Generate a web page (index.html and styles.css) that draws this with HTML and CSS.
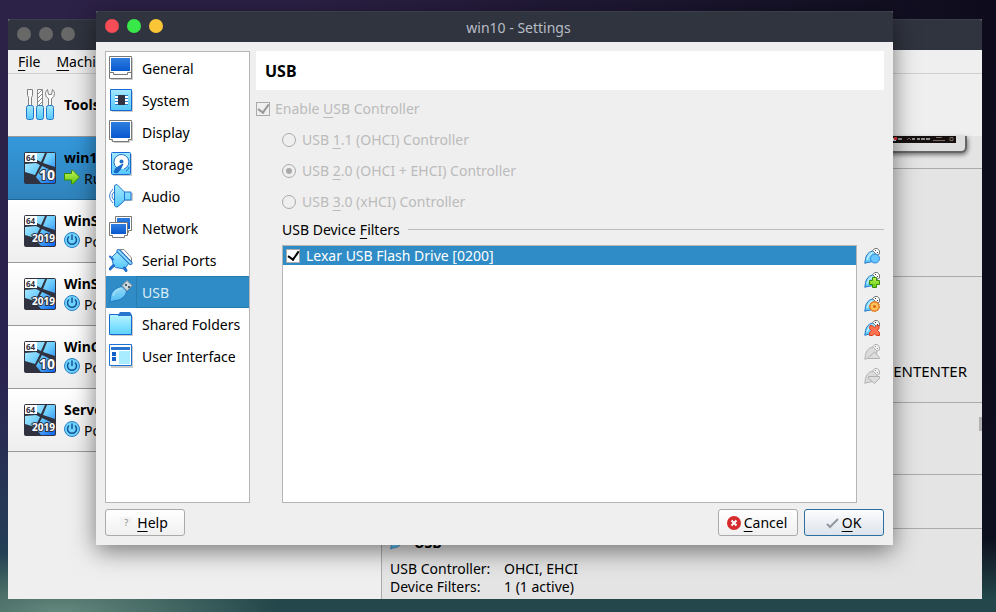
FILE: index.html
```html
<!DOCTYPE html>
<html lang="en">
<head>
<meta charset="utf-8">
<title>win10 - Settings</title>
<link rel="stylesheet" href="styles.css">
</head>
<body>
<svg class="defs" aria-hidden="true">
  <defs>
    <linearGradient id="sky" x1="0" y1="0" x2="0" y2="1"><stop offset="0" stop-color="#a4e8ff"/><stop offset="1" stop-color="#55c8fb"/></linearGradient>
    <linearGradient id="folder" x1="0" y1="0" x2="0" y2="1"><stop offset="0" stop-color="#b8f4ff"/><stop offset="1" stop-color="#5cd2ff"/></linearGradient>
    <linearGradient id="screen" x1="0" y1="0" x2="0" y2="1"><stop offset="0" stop-color="#2f7de0"/><stop offset="1" stop-color="#0759ce"/></linearGradient>
    <linearGradient id="pane" x1="0" y1="0" x2="1" y2="1"><stop offset="0" stop-color="#c4f4ff"/><stop offset=".5" stop-color="#6accff"/><stop offset="1" stop-color="#0b62f0"/></linearGradient>
    <linearGradient id="green" x1="0" y1="0" x2="0" y2="1"><stop offset="0" stop-color="#c9f55a"/><stop offset="1" stop-color="#5bc90c"/></linearGradient>
  </defs>
  <symbol id="i-general" viewBox="0 0 24 24">
    <path d="M2 2h22v22H2z" fill="#ccc"/>
    <path d="M.5.5h22v22H.5z" fill="#fff" stroke="#777"/>
    <path d="M2 2h19v13H2z" fill="url(#screen)"/>
    <path d="M1 16.500h3.500v2h14v-2H22" fill="none" stroke="#777"/>
  </symbol>
  <symbol id="i-display" viewBox="0 0 24 24">
    <path d="M2 2h22v19h-3v2H5v-2H2z" fill="#ccc"/>
    <path d="M.5.5h22v19h-3v2h-16v-2h-3z" fill="#fff" stroke="#777"/>
    <path d="M2 2h19v16H2z" fill="url(#screen)"/>
  </symbol>
  <symbol id="i-system" viewBox="0 0 24 24">
    <path d="M3 3h21v21H3z" fill="#ccc"/>
    <path d="M1.500 1.500h21v21h-21z" fill="url(#sky)" stroke="#1769d6"/>
    <path d="M6 7h13v10H6z" fill="#2480d2"/>
    <path d="M6 8h3v2H6zM6 11h3v2H6zM6 14h3v2H6zM16 8h3v2h-3zM16 11h3v2h-3zM16 14h3v2h-3z" fill="#fff"/>
    <path d="M9 7h7v10H9z" fill="#30323f"/>
  </symbol>
  <symbol id="i-storage" viewBox="0 0 24 24">
    <path d="M4 2h19v22H4z" fill="#ccc"/>
    <rect x="2.500" y=".5" width="19" height="22" rx="1" fill="url(#sky)" stroke="#1769d6"/>
    <path d="M8 16A7.500 7.500 0 1 1 15 17" fill="#fff" stroke="#1f6fc7"/>
    <circle cx="12.500" cy="9.500" r="2" fill="#1f6fc7"/>
    <path d="M14 12L7 16l-2 4 3 1 3-3z" fill="#1a67c6" stroke="#1a67c6"/>
    <path d="M17 19a5 5 0 0 0 3-4" fill="none" stroke="#1f6fc7"/>
  </symbol>
  <symbol id="i-audio" viewBox="0 0 24 24">
    <path d="M8 3l8 6h8v8h-8l-8 7z" fill="#ccc"/>
    <path d="M4 5Q-3 12 4 19M5 8Q1 12 5 16" fill="none" stroke="#3f83cf"/>
    <path d="M5.500 2Q6 .5 8 .5L13 5.500 15.500 8h6.500v8h-6.500L13 19 8 23q-2 0-2.500-1.500z" fill="url(#sky)" stroke="#1f74cd"/>
    <path d="M15.500 8v8" stroke="#1f74cd"/>
  </symbol>
  <symbol id="i-network" viewBox="0 0 24 24">
    <path d="M6.500.5h16v14h-3v2h-10v-2h-3z" fill="#fff" stroke="#777"/><path d="M8 2h13v11H8z" fill="url(#screen)"/>
    <path d="M.5 6.500h18v13h-3v2h-12v-2h-3z" fill="#fff" stroke="#777"/><path d="M2 8h15v10H2z" fill="url(#screen)"/>
  </symbol>
  <symbol id="i-serial" viewBox="0 0 24 24">
    <path d="M11 1.500h4l7.500 8.500v4z" fill="#fff" stroke="#888"/>
    <path d="M8.500 3.500L2.500 9.500l2 8 2 2 9 1.500 4.500-6z" fill="url(#sky)" stroke="#2a78cf"/>
    <path d="M9.500 3l12 12" stroke="#1f6fcc" stroke-width="4" stroke-linecap="round"/>
    <path d="M9.500 3l12 12" stroke="#8edcff" stroke-width="2" stroke-linecap="round"/>
    <path d="M4.500 17.500L1 21M15.500 20l1.500 2.500" stroke="#1f6fcc" stroke-width="3" stroke-linecap="round"/>
    <path d="M1 8.500l3 3" stroke="#1f6fcc" stroke-width="2" stroke-linecap="round"/>
  </symbol>
  <symbol id="i-usb" viewBox="0 0 24 24">
    <path d="M1 22.500C2 18 1 15 4 11 7 8 10 7 13 6.500L17.500 11C17 15 15 17 12 19 9 21 5 20 1 22.500z" fill="url(#sky)" stroke="#1e73c4"/>
    <path d="M4 16Q6 10 12 8.500" fill="none" stroke="#d2f5ff"/>
    <path d="M13 5.500L18 .5l5 5-5 5.500z" fill="#e8e8e8" stroke="#8b8b8b"/>
    <path d="M16 4h2v2h-2zM19 6h2v2h-2z" fill="#555"/>
  </symbol>
  <symbol id="i-folder" viewBox="0 0 24 24">
    <path d="M2 4h22v20H2z" fill="#ccc"/>
    <path d="M.5 2.500h9l1 1h12v19H.5z" fill="url(#folder)" stroke="#1769d6"/>
    <path d="M9 3l2-3h10l2 3v1H9z" fill="#2775cf"/>
  </symbol>
  <symbol id="i-ui" viewBox="0 0 24 24">
    <path d="M2 2h22v22H2z" fill="#ccc"/><path d="M.5.5h22v21H.5z" fill="#fff" stroke="#1d73d4"/>
    <path d="M2 3h19v3H2z" fill="#2775cf"/><path d="M3 8h4v4H3zM3 13h4v4H3z" fill="#155fc8"/>
    <path d="M10 7h11v13H10z" fill="#a8ecff"/>
  </symbol>
  <symbol id="i-tools" viewBox="0 0 32 36">
    <path d="M3.500 2.500h5v6l-1 2v8h-3v-8l-1-2z" fill="#f8f8f8" stroke="#808080"/>
    <path d="M13.500 2.500h5v16h-5z" fill="#fff" stroke="#888"/>
    <path d="M14 7l4-4M14 11l4-4M14 15l4-4M14 19l4-4" stroke="#888"/>
    <path d="M24.500 18.500v-7q-3-1-3-5 0-2 2-4l1 5h3l1-5q2 2 2 4 0 4-3 5v7z" fill="#fff" stroke="#808080"/>
    <path d="M2.500 20.500q0-2 2-2h3q2 0 2 2v10q0 2-2 2h-3q-2 0-2-2zM12.500 20.500q0-2 2-2h3q2 0 2 2v10q0 2-2 2h-3q-2 0-2-2zM22.500 20.500q0-2 2-2h3q2 0 2 2v10q0 2-2 2h-3q-2 0-2-2z" fill="url(#sky)" stroke="#2077c8"/>
  </symbol>
  <symbol id="i-win" viewBox="0 0 32 32">
    <rect width="32" height="32" rx="2" fill="#30323f"/>
    <path d="M13 1h8l-4 9-4-2zM23 1h8v14l-12-4zM1 12l11-1 4 2-5 10-10-3zM18 14l13 6v10l-1 1H17l-5-6z" fill="url(#pane)"/>
    <path d="M1 1h12v9H1z" fill="#fff"/>
  </symbol>
  <symbol id="i-power" viewBox="0 0 16 16">
    <circle cx="8" cy="8" r="7.500" fill="#70d5ff" stroke="#2b7fc6"/>
    <path d="M5 4.500a4.500 4.500 0 1 0 6 0M8 2.500v5.500" fill="none" stroke="#12569b" stroke-width="1.500"/>
  </symbol>
  <symbol id="i-run" viewBox="0 0 16 16">
    <path d="M.5 4.500h7v-3h1.500l6.500 6.500L9 15H7.500v-4h-7z" fill="url(#green)" stroke="#3b8c08"/>
  </symbol>
  <symbol id="i-plug" viewBox="0 0 16 16">
    <path d="M.8 15.300C1.500 12 1 9 4 5.500 6 3.500 8 3 9.500 3L13 7C13 11 11 13 8.500 13.500 6 14.500 4 14 .8 15.300z" fill="url(#sky)" stroke="#2277c8"/>
    <path d="M3 12Q4 7 8 5" fill="none" stroke="#d4f6ff"/>
    <path d="M8.500 2.500L11 .5h2.500L15.500 3v3L13 7z" fill="#fff" stroke="#777"/>
    <path d="M11 2h1v1h-1zM13 4h1v1h-1z" fill="#444"/>
  </symbol>
  <symbol id="i-plug-off" viewBox="0 0 16 16">
    <path d="M.8 15.300C1.500 12 1 9 4 5.500 6 3.500 8 3 9.500 3L13 7C13 11 11 13 8.500 13.500 6 14.500 4 14 .8 15.300z" fill="#dadada" stroke="#b4b4b4"/>
    <path d="M8.500 2.500L11 .5h2.500L15.500 3v3L13 7z" fill="#eee" stroke="#b4b4b4"/>
    <path d="M11 2h1v1h-1zM13 4h1v1h-1z" fill="#999"/>
  </symbol>
</svg>

<section class="window manager">
  <header class="titlebar"><i class="dot"></i><i class="dot"></i><i class="dot"></i></header>
  <nav class="menubar"><a href="#file"><u>F</u>ile</a><a href="#machine"><u>M</u>achine</a></nav>
  <div class="workspace">
    <div class="machines">
      <div class="tools"><svg class="tools-icon"><use href="#i-tools"/></svg><b>Tools</b></div>
      <div class="machine current">
        <svg class="os" viewBox="0 0 32 32"><use href="#i-win"/><text x="2" y="9" class="os-bits">64</text><text x="31" y="28" class="os-name">10</text></svg>
        <div class="info"><b>win10</b><span><svg><use href="#i-run"/></svg>Running</span></div>
      </div>
      <div class="machine">
        <svg class="os" viewBox="0 0 32 32"><use href="#i-win"/><text x="2" y="9" class="os-bits">64</text><text x="31" y="27" class="os-name year">2019</text></svg>
        <div class="info"><b>WinS</b><span><svg><use href="#i-power"/></svg>Powered</span></div>
      </div>
      <div class="machine">
        <svg class="os" viewBox="0 0 32 32"><use href="#i-win"/><text x="2" y="9" class="os-bits">64</text><text x="31" y="27" class="os-name year">2019</text></svg>
        <div class="info"><b>WinS</b><span><svg><use href="#i-power"/></svg>Powered</span></div>
      </div>
      <div class="machine">
        <svg class="os" viewBox="0 0 32 32"><use href="#i-win"/><text x="2" y="9" class="os-bits">64</text><text x="31" y="28" class="os-name">10</text></svg>
        <div class="info"><b>WinC</b><span><svg><use href="#i-power"/></svg>Powered</span></div>
      </div>
      <div class="machine">
        <svg class="os" viewBox="0 0 32 32"><use href="#i-win"/><text x="2" y="9" class="os-bits">64</text><text x="31" y="27" class="os-name year">2019</text></svg>
        <div class="info"><b>Server</b><span><svg><use href="#i-power"/></svg>Powered</span></div>
      </div>
    </div>
    <div class="details">
      <div class="block preview">
        <div class="monitor"><svg class="tray" viewBox="0 0 66 7">
          <path d="M2 2h4v3H2z" fill="#dfe8fa"/><path d="M4 1h3v3H4z" fill="#d33"/>
          <path d="M8 3h4M22 3h3M27 3h3M31 3h4M36 3h4" stroke="#8d8d8d" stroke-width="2"/>
          <path d="M17 4l2-2 2 2M46 1.500h6M43 4.500h12M60 1.500h3v3h-3z" fill="none" stroke="#77695e"/>
        </svg></div>
      </div>
      <div class="block system"></div>
      <div class="block adapter"><span>ENTENTER</span></div>
      <div class="block audio"><i class="scroll"></i></div>
      <div class="block network"></div>
      <div class="block usb">
        <h3><svg><use href="#i-usb"/></svg>USB</h3>
        <dl><dt>USB Controller:</dt><dd>OHCI, EHCI</dd><dt>Device Filters:</dt><dd>1 (1 active)</dd></dl>
      </div>
    </div>
  </div>
</section>

<section class="window dialog" role="dialog" aria-labelledby="dialog-title">
  <header class="titlebar">
    <i class="dot red"></i><i class="dot green"></i><i class="dot yellow"></i>
    <h1 id="dialog-title">win10 - Settings</h1>
  </header>
  <div class="body">
    <nav class="categories">
      <a href="#general"><svg><use href="#i-general"/></svg><span>General</span></a>
      <a href="#system"><svg><use href="#i-system"/></svg><span>System</span></a>
      <a href="#display"><svg><use href="#i-display"/></svg><span>Display</span></a>
      <a href="#storage"><svg><use href="#i-storage"/></svg><span>Storage</span></a>
      <a href="#audio"><svg><use href="#i-audio"/></svg><span>Audio</span></a>
      <a href="#network"><svg><use href="#i-network"/></svg><span>Network</span></a>
      <a href="#serial"><svg><use href="#i-serial"/></svg><span>Serial Ports</span></a>
      <a href="#usb" class="active" aria-current="page"><svg><use href="#i-usb"/></svg><span>USB</span></a>
      <a href="#folders"><svg><use href="#i-folder"/></svg><span>Shared Folders</span></a>
      <a href="#ui"><svg><use href="#i-ui"/></svg><span>User Interface</span></a>
    </nav>
    <main class="page">
      <h2>USB</h2>
      <div class="option"><input type="checkbox" id="enable" checked disabled><label for="enable">Enable <u>U</u>SB Controller</label></div>
      <div class="option sub"><input type="radio" name="ctl" id="usb1" disabled><label for="usb1">USB <u>1</u>.1 (OHCI) Controller</label></div>
      <div class="option sub"><input type="radio" name="ctl" id="usb2" checked disabled><label for="usb2">USB <u>2</u>.0 (OHCI + EHCI) Controller</label></div>
      <div class="option sub"><input type="radio" name="ctl" id="usb3" disabled><label for="usb3">USB <u>3</u>.0 (xHCI) Controller</label></div>
      <h3 class="group">USB Device <span><u>F</u>ilters</span></h3>
      <div class="filters">
        <div class="filter-list">
          <div class="filter"><input type="checkbox" id="lexar" checked><label for="lexar">Lexar USB Flash Drive [0200]</label></div>
        </div>
        <div class="actions">
          <button aria-label="Add empty filter"><svg viewBox="0 0 16 16"><use href="#i-plug"/><circle cx="11" cy="10.500" r="4.500" fill="#67c6ff" stroke="#2b86db"/></svg></button>
          <button aria-label="Add filter from device"><svg viewBox="0 0 16 16"><use href="#i-plug"/><path d="M8.500 5.500h4v3h3v4h-3v3h-4v-3h-3v-4h3z" fill="url(#green)" stroke="#3b8c08"/></svg></button>
          <button aria-label="Edit filter"><svg viewBox="0 0 16 16"><use href="#i-plug"/><circle cx="10.500" cy="10.500" r="5" fill="#ffb84a" stroke="#dd6a13" stroke-dasharray="2 1"/><circle cx="10.500" cy="10.500" r="4.500" fill="#ffc05a" stroke="#e3771b"/><circle cx="10.500" cy="10.500" r="1.300" fill="#c94f00"/></svg></button>
          <button aria-label="Remove filter"><svg viewBox="0 0 16 16"><use href="#i-plug"/><path d="M6 5.500h2l2.500 2 2.500-2h2v3l-1.500 2 2 2v3h-3l-2-1.500-2 1.500h-3v-3l2-2-2-2z" fill="#ff7250" stroke="#da3c20"/></svg></button>
          <button aria-label="Move filter up" disabled><svg viewBox="0 0 16 16"><use href="#i-plug-off"/><path d="M4.500 14.500v-1l6-5.500 5 5.500v1z" fill="#ddd" stroke="#b0b0b0"/></svg></button>
          <button aria-label="Move filter down" disabled><svg viewBox="0 0 16 16"><use href="#i-plug-off"/><path d="M4.500 8.500h11v2l-5 5-6-5z" fill="#ddd" stroke="#b0b0b0"/></svg></button>
        </div>
      </div>
    </main>
  </div>
  <footer class="buttons">
    <button class="push help"><i>?</i><span><u>H</u>elp</span></button>
    <button class="push"><svg viewBox="0 0 14 14"><circle cx="7" cy="7" r="7" fill="#d62b2f"/><path d="M4.500 4.500l5 5M9.500 4.500l-5 5" stroke="#fff" stroke-width="2"/></svg><span><u>C</u>ancel</span></button>
    <button class="push default"><svg viewBox="0 0 14 14"><path d="M2 8l3 3 8-8" fill="none" stroke="#94989f" stroke-width="2"/></svg><span><u>O</u>K</span></button>
  </footer>
</section>
</body>
</html>
```
FILE: styles.css
```css
* { box-sizing: border-box; }
html, body { height: 100%; }
body {
  margin: 0;
  position: relative;
  overflow: hidden;
  font: 14px/18px "Noto Sans", sans-serif;
  color: #000;
  background:
    radial-gradient(ellipse 220px 60px at 60px 100%, #64887c, transparent),
    linear-gradient(transparent 88%, #23474a 98%),
    linear-gradient(90deg, transparent 30%, rgba(8, 8, 20, .85)),
    linear-gradient(#2c2146, #2a2350 60%, #253e57 90%);
}
h1, h2, h3, dl, dd { margin: 0; font: inherit; }
a { color: inherit; text-decoration: none; }
u { text-decoration: underline 1px; text-underline-offset: 3px; }
svg { display: block; flex: none; width: 16px; height: 16px; }
.defs { position: absolute; width: 0; height: 0; }

.window { position: absolute; display: flex; flex-direction: column; background: #efefef; border-radius: 2px 2px 0 0; }
.manager { inset: 19px 14px 13px 8px; overflow: hidden; }
.dialog { inset: 11px 103px 67px 96px; box-shadow: 0 6px 24px rgba(0, 0, 0, .5); }
.titlebar { position: relative; flex: none; display: flex; align-items: center; gap: 8px; height: 31px; padding: 0 9px; background: #30343f; border-top: 1px solid #3a3e49; border-radius: 2px 2px 0 0; }
.manager .titlebar, .dialog .titlebar { padding-bottom: 2px; }
.titlebar h1 { flex: 1; padding: 4px 18px 0 0; text-align: center; color: #b8bcc5; }
.dot { flex: none; width: 14px; height: 14px; border-radius: 50%; background: #686868; }
.red { background: #f64c55; }
.green { background: #38e849; }
.yellow { background: #fac536; }

.menubar { flex: none; display: flex; gap: 16px; height: 24px; padding: 3px 10px; border-bottom: 1px solid #d0d0d0; }
.workspace { flex: 1; display: grid; grid-template-columns: 374px 1fr; min-height: 0; }
.machines { border-right: 1px solid #aaa; }
.tools { display: flex; align-items: center; gap: 8px; height: 63px; padding: 0 16px; border-bottom: 1px solid #999; }
.tools-icon { width: 32px; height: 36px; }
.machine { display: flex; gap: 8px; height: 63px; padding: 12px 16px; border-bottom: 1px solid #999; background: linear-gradient(#fff, #eee); }
.machine .os { width: 32px; height: 32px; margin-top: 3px; }
.current { background: linear-gradient(#3498dc, #2f83bb); border-color: #1d6695; }
.info b { display: block; }
.info span { display: flex; align-items: center; gap: 4px; padding-top: 3px; }
.info svg { margin-top: -5px; }
.os-bits { font: bold 8px "Noto Sans", sans-serif; fill: #30323f; }
.os-name { font: bold 14px "Noto Sans", sans-serif; fill: #fff; stroke: #30323f; stroke-width: 2px; paint-order: stroke; text-anchor: end; }
.year { font-size: 10px; }

.details { display: flex; flex-direction: column; min-width: 0; background: #e4e4e4; margin-top: 62px; }
.block { flex: none; border-bottom: 1px solid #aaa; }
.preview { height: 33px; padding-right: 15px; }
.monitor { height: 17px; padding-right: 9px; border: solid #666; border-width: 0 2px 2px 0; border-radius: 0 0 6px; background: #dedede; box-shadow: 1px 2px 4px #777; }
.tray { width: 66px; height: 7px; margin-left: auto; background: #15100f; }
.system { height: 108px; }
.adapter { height: 126px; padding: 85px 15px 0; text-align: right; font-size: 15px; }
.audio { height: 72px; padding-top: 14px; }
.scroll { display: block; width: 3px; height: 14px; margin-left: auto; background: #b3b3b3; }
.network { height: 54px; }
.usb { flex: 1; padding: 5px 8px; border: 0; }
.usb h3 { display: flex; gap: 8px; font-weight: bold; margin-bottom: 8px; }
.usb dl { display: grid; grid-template-columns: 104px 1fr; column-gap: 10px; }

.body { flex: 1; display: grid; grid-template-columns: 145px 1fr; gap: 6px; min-height: 0; padding: 9px 9px 6px; }
.categories { background: #fff; border: 1px solid #b5b5b5; }
.categories a { display: flex; align-items: center; height: 32px; padding-left: 3px; }
.categories svg { width: 24px; height: 24px; }
.categories span { flex: 1; height: 32px; margin-left: 3px; padding-left: 6px; line-height: 34px; white-space: nowrap; }
.categories .active { background: #308cc6; color: #dcecf7; }
.active svg { opacity: .85; }
.active span { border: 1px solid #287caf; border-right: 0; padding-left: 5px; line-height: 32px; }
.page { display: flex; flex-direction: column; min-width: 0; }
.page h2 { height: 39px; margin-bottom: 9px; padding: 0 9px; background: #fff; font-size: 16px; line-height: 40px; font-weight: bold; }
.option { display: flex; align-items: center; gap: 5px; height: 19px; margin-bottom: 12px; color: #bbb; }
.sub { margin-left: 26px; gap: 6px; }
input { appearance: none; flex: none; display: grid; place-items: center; width: 14px; height: 14px; margin: 0; background: #fff; border: 1px solid #aaa; }
input:disabled { background: #efefef; }
input[type=radio] { border-radius: 50%; }
input[type=radio]:checked::after { content: ""; width: 6px; height: 6px; border-radius: 50%; background: #aaa; }
input[type=checkbox]:checked::after { content: ""; width: 5px; height: 9px; margin-top: -2px; border: solid #000; border-width: 0 2px 2px 0; transform: rotate(35deg); }
input[type=checkbox]:disabled::after { border-color: #999; }
.group { display: flex; gap: 4px; margin: -3px 0 6px 26px; height: 19px; align-items: center; }
.group::after { content: ""; flex: 1; height: 1px; margin-left: 4px; background: #bdbdbd; }
.filters { flex: 1; display: flex; gap: 7px; margin-left: 26px; }
.filter-list { flex: 1; background: #fff; border: 1px solid #b5b5b5; }
.filter { display: flex; align-items: center; gap: 6px; height: 19px; padding-left: 3px; background: #308cc6; color: #fff; }
.actions { width: 20px; display: flex; flex-direction: column; gap: 8px; padding-top: 3px; }
.actions button { width: 16px; height: 16px; padding: 0; border: 0; background: none; }

.buttons { display: flex; gap: 6px; padding: 0 9px 9px; }
.push { display: flex; align-items: center; justify-content: center; gap: 3px; width: 80px; height: 27px; padding: 0 2px 0 0; border: 1px solid #aaa; border-radius: 3px; background: linear-gradient(#fff, #f0f0f0); font: inherit; color: #000; }
.push svg { width: 14px; height: 14px; }
.help { margin-right: auto; gap: 5px; }
.help i { width: 12px; background: #f3f3f3; color: #888; font: 9px/12px "Noto Sans", sans-serif; }
.default { border-color: #2b6f9f; background: linear-gradient(#fcfdfe, #dce3ec); }
```
